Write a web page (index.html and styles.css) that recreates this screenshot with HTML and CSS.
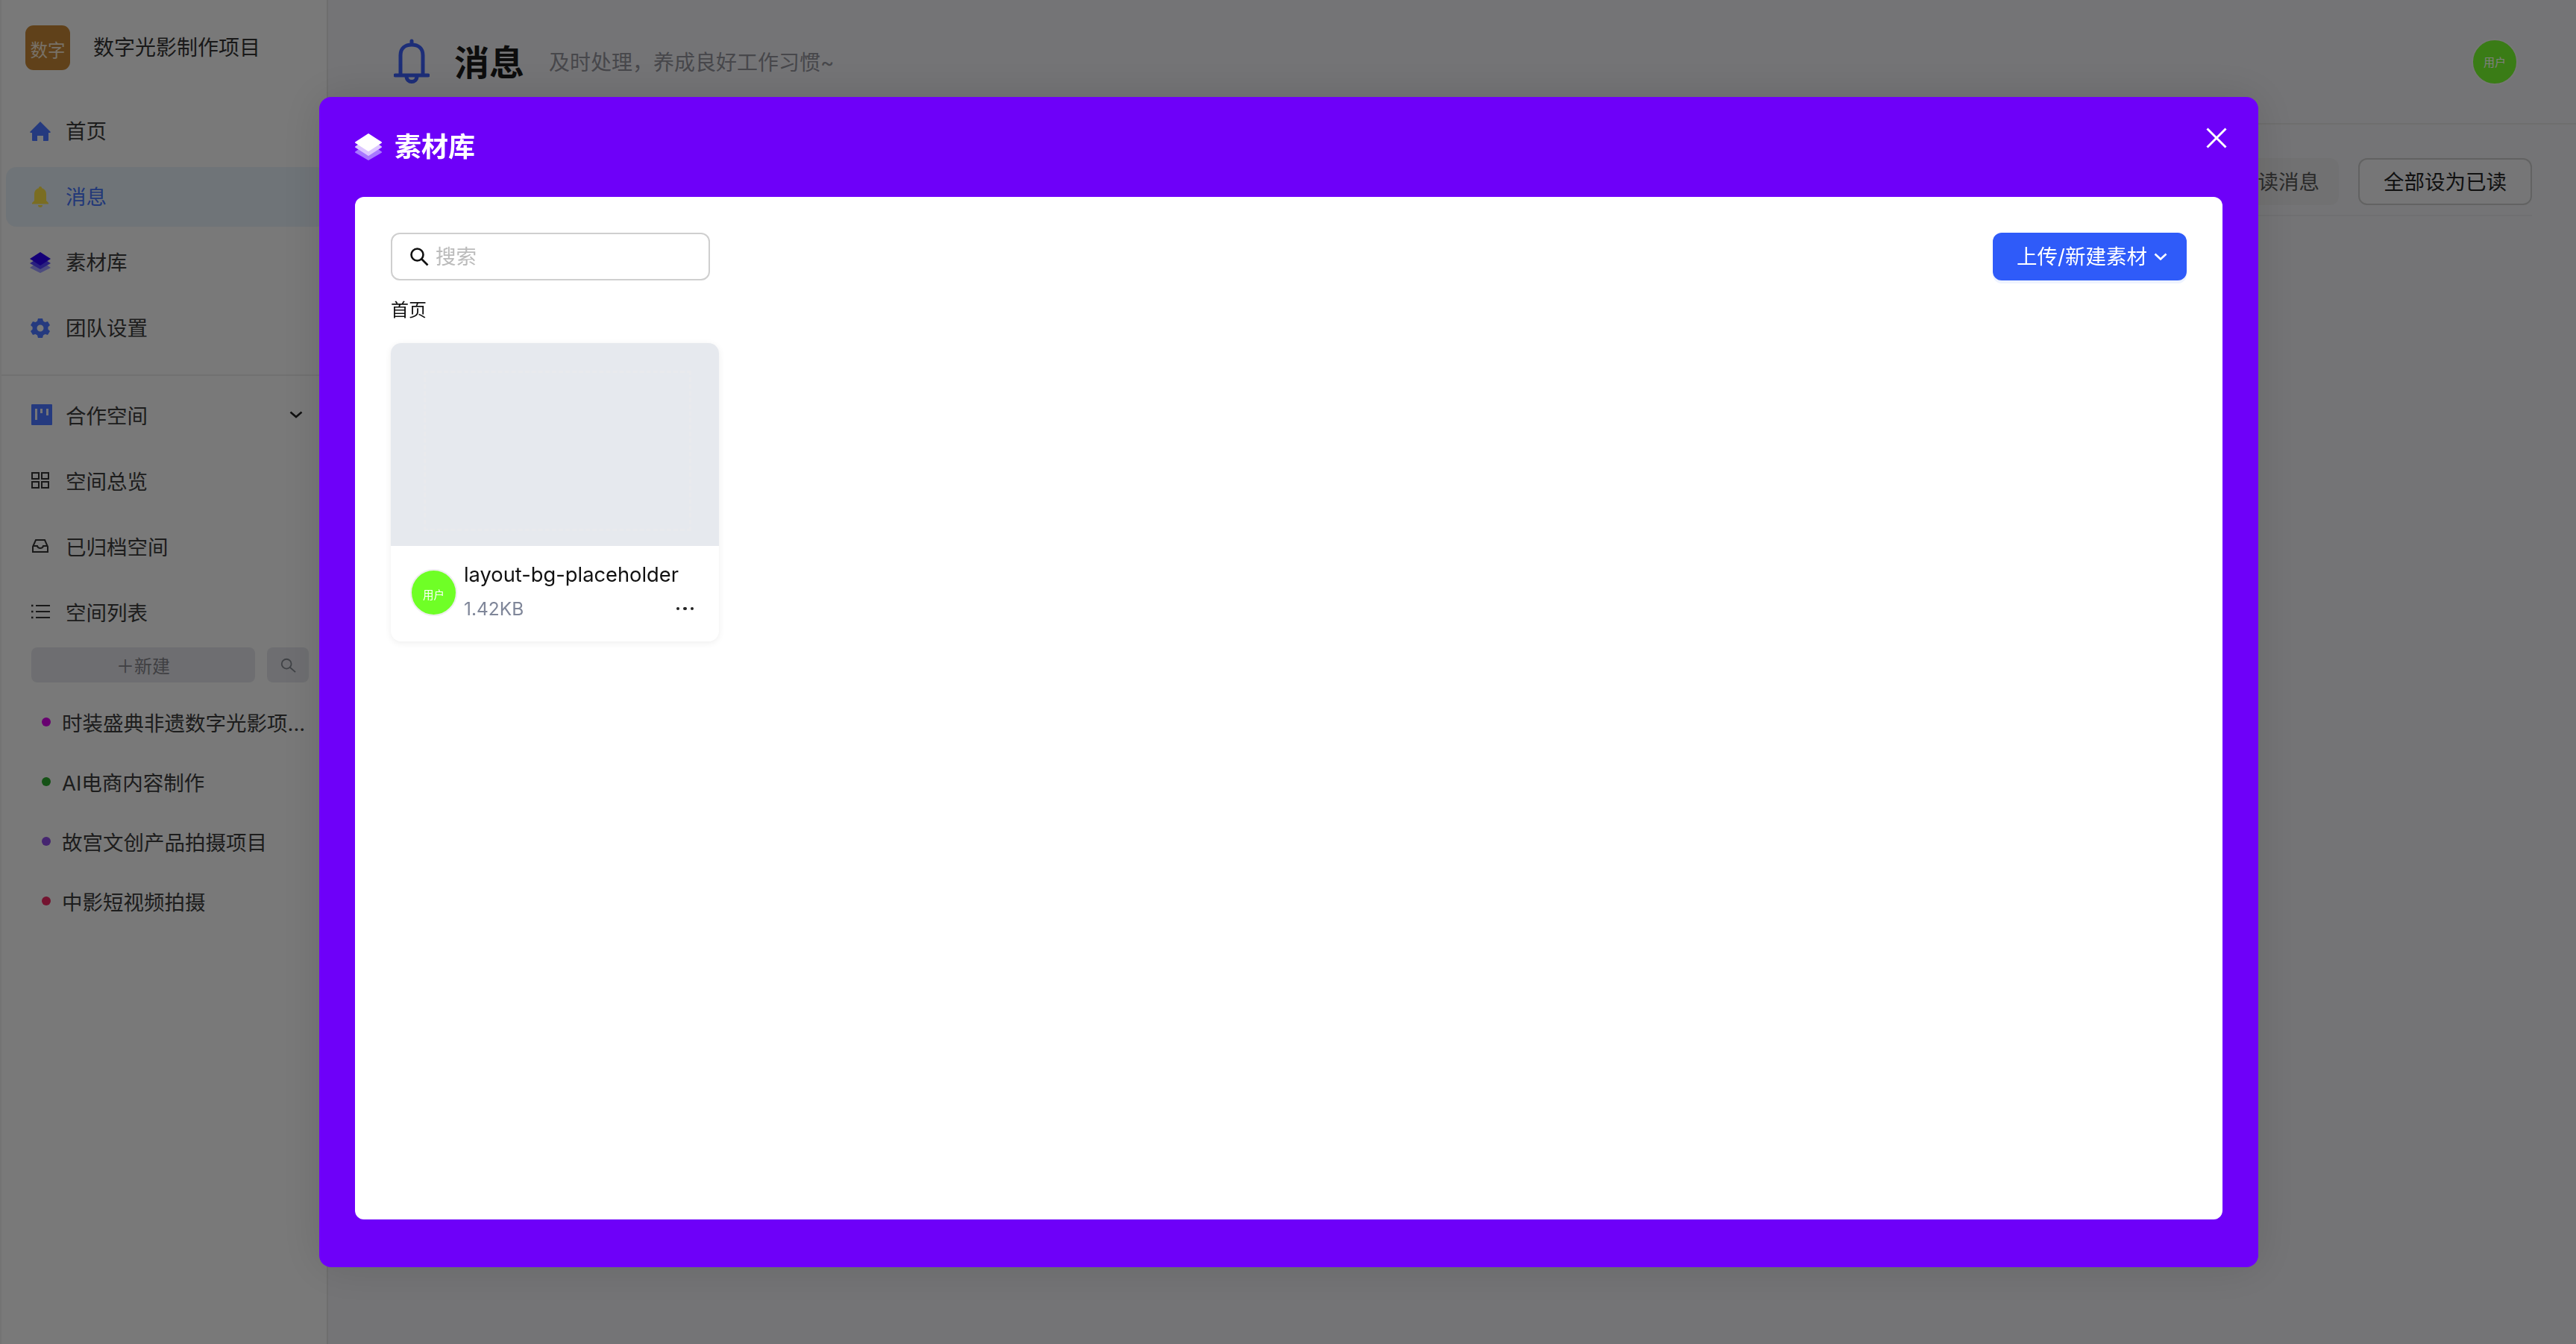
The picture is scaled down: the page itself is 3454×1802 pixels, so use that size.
FILE: index.html
```html
<!DOCTYPE html>
<html lang="zh-CN">
<head>
    <meta charset="UTF-8">
    <title>消息</title>
    <link rel="stylesheet" href="styles.css">
</head>
<body>
    <div class="layout">
        <aside class="sidebar">
            <div class="brand">
                <div class="brand-logo">数字</div>
                <div class="brand-name">数字光影制作项目</div>
            </div>
            <nav class="nav-main">
                <a class="nav-item">
                    <svg class="nav-icon" viewBox="0 0 28 28"><path class="fill-blue" d="M14 1 27.500 14.500a.8.800 0 0 1-.6 1.400H25V26a1 1 0 0 1-1 1h-6v-7h-8v7H4a1 1 0 0 1-1-1V15.900H1.100a.8.800 0 0 1-.6-1.400z"/></svg>
                    <span>首页</span>
                </a>
                <a class="nav-item active">
                    <svg class="nav-icon" viewBox="0 0 28 28"><path class="fill-gold" d="M14 0a2 2 0 0 1 2 2.200c4 1 6 4.300 6 8.300V19l3 3v1.500H3V22l3-3v-8.500c0-4 2-7.300 6-8.300A2 2 0 0 1 14 0zM11 25h6a3 3 0 0 1-6 0z"/></svg>
                    <span>消息</span>
                </a>
                <a class="nav-item">
                    <svg class="nav-icon" viewBox="0 0 28 28">
                        <path class="fill-layer3" d="M14 11 28 21 14 28 0 21z"/>
                        <path class="fill-layer2" d="M14 6 28 15 14 23 0 15z"/>
                        <path class="fill-navy" d="M14 0 28 9 14 18 0 9z"/>
                    </svg>
                    <span>素材库</span>
                </a>
                <a class="nav-item">
                    <svg class="nav-icon" viewBox="0 0 28 28"><path class="fill-blue" fill-rule="evenodd" d="M11 1h6l1 3.500 2.500 1.400 3.500-1 3 5.100-2.600 2.500v3l2.600 2.500-3 5.100-3.500-1-2.500 1.400-1 3.500h-6l-1-3.500-2.500-1.400-3.500 1-3-5.100L3.600 15.500v-3L1 10l3-5.100 3.500 1L10 4.500zM14 9.500a4.500 4.500 0 1 0 0 9 4.500 4.500 0 0 0 0-9z"/></svg>
                    <span>团队设置</span>
                </a>
            </nav>
            <nav class="nav-spaces">
                <a class="nav-item">
                    <svg class="nav-icon wide" viewBox="0 0 28 28"><rect class="fill-blue" width="28" height="28" rx="1"/><path class="fill-white" d="M5 6h3v15H5zM12 6h3v6h-3zM20 6h3v9h-3z"/></svg>
                    <span>合作空间</span>
                    <svg class="chevron" viewBox="0 0 18 10"><path d="M1.500 1.500 9 8l7.500-6.500"/></svg>
                </a>
                <a class="nav-item">
                    <svg class="nav-icon" viewBox="0 0 28 28"><path class="line" d="M3 4h9v8H3zM16 4h9v8h-9zM3 16h9v8H3zM16 16h9v8h-9z"/></svg>
                    <span>空间总览</span>
                </a>
                <a class="nav-item">
                    <svg class="nav-icon" viewBox="0 0 28 28"><path class="line" d="M4 15 8 6h12l4 9v7H4zM4 14h6c1 4 7 4 8 0h6"/></svg>
                    <span>已归档空间</span>
                </a>
                <a class="nav-item">
                    <svg class="nav-icon" viewBox="0 0 28 28"><path class="line" d="M8 6h19M8 14h19M8 22h19"/><path class="dots" d="M2 6h2.500M2 14h2.500M2 22h2.500"/></svg>
                    <span>空间列表</span>
                </a>
                <div class="space-tools">
                    <div class="space-new">＋新建</div>
                    <div class="space-search">
                        <svg viewBox="0 0 24 24"><circle cx="10" cy="10" r="7"/><path d="m15 15 8 7"/></svg>
                    </div>
                </div>
                <ul class="space-list">
                    <li><i class="dot dot-purple"></i><span>时装盛典非遗数字光影项...</span></li>
                    <li><i class="dot dot-green"></i><span>AI电商内容制作</span></li>
                    <li><i class="dot dot-violet"></i><span>故宫文创产品拍摄项目</span></li>
                    <li><i class="dot dot-red"></i><span>中影短视频拍摄</span></li>
                </ul>
            </nav>
        </aside>

        <main class="main">
            <header class="page-header">
                <svg class="page-bell" viewBox="0 0 48 62"><path d="M24 3v5M9 47V22C9 13 15 8 24 8s15 5 15 14v25M2 49h44M17 50c0 10 14 10 14 0"/></svg>
                <h1>消息</h1>
                <p>及时处理，养成良好工作习惯~</p>
                <div class="user-avatar">用户</div>
            </header>
            <div class="page-tools">
                <button class="tool-btn tool-muted">未读消息</button>
                <button class="tool-btn">全部设为已读</button>
            </div>
        </main>
    </div>

    <div class="overlay"></div>

    <div class="modal-wrap">
        <section class="modal">
            <header class="modal-header">
                <svg class="modal-icon" viewBox="0 0 36 36">
                    <path class="layer3" d="M18 13 35 25 18 35 1 25z"/>
                    <path class="layer2" d="M18 7 35 18 18 29 1 18z"/>
                    <path class="layer1" d="M18 1 35 12 18 23 1 12z"/>
                </svg>
                <h2>素材库</h2>
                <svg class="modal-close" viewBox="0 0 28 28"><path d="M1.500 1.500 26.500 26.500M26.500 1.500 1.500 26.500"/></svg>
            </header>
            <div class="modal-body">
                <div class="toolbar">
                    <label class="search-box">
                        <svg viewBox="0 0 26 26"><circle cx="10.500" cy="10.500" r="8"/><path d="m16.500 16.500 8 8"/></svg>
                        <span>搜索</span>
                    </label>
                    <button class="upload-btn">
                        <span>上传/新建素材</span>
                        <svg viewBox="0 0 18 10"><path d="M1.500 1.500 9 8.500l7.500-7"/></svg>
                    </button>
                </div>
                <div class="crumb">首页</div>
                <article class="asset-card">
                    <div class="asset-thumb"><div class="asset-dash"></div></div>
                    <div class="asset-info">
                        <div class="asset-avatar">用户</div>
                        <div class="asset-meta">
                            <div class="asset-name">layout-bg-placeholder</div>
                            <div class="asset-row">
                                <span class="asset-size">1.42KB</span>
                                <span class="asset-more"><i></i><i></i><i></i></span>
                            </div>
                        </div>
                    </div>
                </article>
            </div>
        </section>
    </div>
</body>
</html>
```

FILE: styles.css
```css
* {
    margin: 0;
    padding: 0;
    box-sizing: border-box;
}
html, body {
    height: 100%;
    overflow: hidden;
}
body {
    font-family: Inter, "Noto Sans CJK SC", sans-serif;
    font-size: 27.5px;
    color: #333;
    background: #e8e9ec;
}
.layout {
    display: flex;
    height: 100%;
}

/* 侧边栏 */
.sidebar {
    width: 440px;
    flex-shrink: 0;
    background: #f2f2f2;
    border-left: 2px solid #e6e6e6;
    border-right: 2px solid #dcdcdc;
    overflow: hidden;
}
.brand {
    display: flex;
    gap: 31px;
    padding: 34px 0 0 32px;
    height: 128px;
    align-items: flex-start;
}
.brand-logo {
    width: 60px;
    height: 60px;
    border-radius: 11px;
    background: #c08234;
    color: #f0e2d0;
    font-size: 23.5px;
    display: flex;
    align-items: center;
    justify-content: center;
    padding-top: 4px;
}
.brand-name {
    font-size: 28px;
    line-height: 60px;
    color: #333;
}
.nav-main {
    padding: 8px 0 16px 6px;
    border-bottom: 2px solid #e3e3e3;
    height: 376px;
}
.nav-main span {
    padding-bottom: 4px;
}
.nav-item {
    display: flex;
    align-items: center;
    height: 80px;
    margin-bottom: 8px;
    padding-left: 32px;
    border-radius: 14px;
    color: #3a3a3a;
}
.nav-item.active {
    background: #dfe9f0;
    color: #4470f0;
}
.nav-icon {
    width: 28px;
    height: 28px;
    margin-right: 20px;
    flex-shrink: 0;
}
.nav-icon.wide {
    margin-left: 2px;
    margin-right: 18px;
}
.fill-blue { fill: #4a74ff; }
.fill-gold { fill: #f4da45; }
.fill-navy { fill: #2a00f0; }
.fill-layer2 { fill: #5240ff; }
.fill-layer3 { fill: #9a98ff; }
.fill-white { fill: #e8e8f0; }
.line {
    fill: none;
    stroke: #333;
    stroke-width: 2;
}
.dots {
    fill: none;
    stroke: #333;
    stroke-width: 2.5;
}
.nav-spaces {
    padding: 12px 0 0 6px;
}
.chevron {
    width: 18px;
    height: 10px;
    margin-left: auto;
    margin-right: 32px;
    fill: none;
    stroke: #222;
    stroke-width: 2.6;
}
.space-tools {
    display: flex;
    gap: 16px;
    padding-left: 34px;
    margin-top: 1px;
}
.space-new, .space-search {
    height: 47px;
    border-radius: 8px;
    background: #dcdde2;
    display: flex;
    align-items: center;
    justify-content: center;
}
.space-new {
    width: 300px;
    font-size: 24px;
    color: #808086;
}
.space-search {
    width: 56px;
}
.space-search svg {
    width: 22px;
    height: 22px;
    fill: none;
    stroke: #80848c;
    stroke-width: 2;
}
.space-list {
    list-style: none;
    margin-top: 13px;
    padding-left: 48px;
}
.space-list li {
    display: flex;
    align-items: center;
    height: 80px;
    color: #3a3a3a;
    white-space: nowrap;
}
.dot {
    width: 12px;
    height: 12px;
    border-radius: 50%;
    margin-right: 15px;
    flex-shrink: 0;
}
.dot-purple { background: #d000e0; }
.dot-green { background: #2aa52c; }
.dot-violet { background: #8a4ae0; }
.dot-red { background: #e82860; }

/* 主内容 */
.main {
    flex: 1;
    min-width: 0;
}
.page-header {
    display: flex;
    align-items: center;
    height: 167px;
    padding: 0 78px 0 88px;
    border-bottom: 2px solid #dcdcdc;
}
.page-bell {
    width: 48px;
    height: 62px;
    margin-right: 33px;
    fill: none;
    stroke: #3a5cf0;
    stroke-width: 5;
    stroke-linecap: round;
}
.page-header h1 {
    font-size: 47px;
    font-weight: 700;
    color: #1a1a1a;
    margin-right: 33px;
    padding-bottom: 4px;
}
.page-header p {
    font-size: 28px;
    color: #8e8e96;
    padding-bottom: 2px;
}
.user-avatar {
    margin-left: auto;
    width: 62px;
    height: 62px;
    border-radius: 50%;
    background: #74f82c;
    border: 2px solid #eee;
    color: #fff;
    font-size: 15px;
    display: flex;
    align-items: center;
    justify-content: center;
}
.page-tools {
    display: flex;
    justify-content: flex-end;
    gap: 26px;
    margin: 45px 59px 0 0;
    padding-bottom: 13px;
    border-bottom: 2px solid #dedfe2;
}
.tool-btn {
    height: 63px;
    padding: 0 32px 4px;
    font: inherit;
    color: #222;
    background: #ecedef;
    border: 2px solid #c4c4c4;
    border-radius: 12px;
}
.tool-muted {
    border-color: transparent;
    background: #e3e3e4;
    color: #555;
    padding: 0 24px 4px 28px;
}

/* 弹窗 */
.overlay {
    position: fixed;
    inset: 0;
    background: rgba(0, 0, 0, 0.5);
}
.modal-wrap {
    position: fixed;
    inset: 0;
    padding: 130px 426px 103px 428px;
}
.modal {
    display: flex;
    flex-direction: column;
    height: 100%;
    background: #6e00f9;
    border-radius: 16px;
    box-shadow: 0 0 60px rgba(0, 0, 0, 0.12);
}
.modal-header {
    display: flex;
    align-items: center;
    height: 134px;
    padding: 0 42px 0 48px;
    color: #fff;
    flex-shrink: 0;
}
.modal-icon {
    width: 36px;
    height: 36px;
    margin-right: 17px;
}
.modal-icon path {
    stroke-linejoin: round;
    stroke-width: 2;
}
.layer1 { fill: #fff; stroke: #fff; }
.layer2 { fill: #dcc6ff; stroke: #dcc6ff; }
.layer3 { fill: #a878ff; stroke: #a878ff; }
.modal-header h2 {
    font-size: 36px;
    font-weight: 700;
    line-height: 48px;
}
.modal-close {
    width: 28px;
    height: 28px;
    margin: -24px 0 0 auto;
    fill: none;
    stroke: #fff;
    stroke-width: 3;
}
.modal-body {
    flex: 1;
    margin: 0 48px 64px;
    padding: 48px;
    background: #fff;
    border-radius: 12px;
}
.toolbar {
    display: flex;
    justify-content: space-between;
}
.search-box {
    display: flex;
    align-items: center;
    gap: 9px;
    width: 428px;
    height: 64px;
    padding-left: 23px;
    border: 2.5px solid #cfcfcf;
    border-radius: 12px;
    color: #bbb;
}
.search-box span {
    padding-bottom: 4px;
}
.search-box svg {
    width: 26px;
    height: 26px;
    fill: none;
    stroke: #111;
    stroke-width: 2.6;
}
.upload-btn {
    display: flex;
    align-items: center;
    gap: 9px;
    width: 260px;
    height: 64px;
    padding-left: 32px;
    border: 0;
    border-radius: 12px;
    background: #2f5bf9;
    color: #fff;
    font: inherit;
    box-shadow: 0 4px 0 #eef3ff;
}
.upload-btn span {
    padding-bottom: 4px;
}
.upload-btn svg {
    width: 18px;
    height: 10px;
    fill: none;
    stroke: #fff;
    stroke-width: 2.6;
}
.crumb {
    font-size: 24px;
    line-height: 40px;
    margin: 20px 0 24px;
    color: #111;
}
.asset-card {
    width: 440px;
    height: 400px;
    border-radius: 14px;
    overflow: hidden;
    background: #fff;
    box-shadow: 0 2px 10px rgba(0, 0, 0, 0.07);
}
.asset-thumb {
    height: 272px;
    padding: 37px 37px 20px 44px;
    background: #e6e9ee;
}
.asset-dash {
    height: 100%;
    border: 3px dashed #e9eaed;
}
.asset-info {
    display: flex;
    gap: 9px;
    padding: 26px 28px 0 26px;
}
.asset-avatar {
    width: 63px;
    height: 63px;
    margin-top: 5px;
    flex-shrink: 0;
    border-radius: 50%;
    background: #6fff26;
    border: 2px solid #eee;
    color: #fff;
    font-size: 14.500px;
    display: flex;
    align-items: center;
    justify-content: center;
    padding-top: 4px;
}
.asset-meta {
    flex: 1;
    min-width: 0;
}
.asset-name {
    font-size: 27.300px;
    line-height: 26px;
    color: #111;
    white-space: nowrap;
}
.asset-row {
    display: flex;
    align-items: center;
    justify-content: space-between;
    margin-top: 17px;
}
.asset-size {
    font-size: 24.500px;
    line-height: 30px;
    color: #7f8699;
}
.asset-more {
    display: flex;
    gap: 5px;
    margin-right: 6px;
}
.asset-more i {
    width: 4.500px;
    height: 4.500px;
    border-radius: 50%;
    background: #222;
}
```
